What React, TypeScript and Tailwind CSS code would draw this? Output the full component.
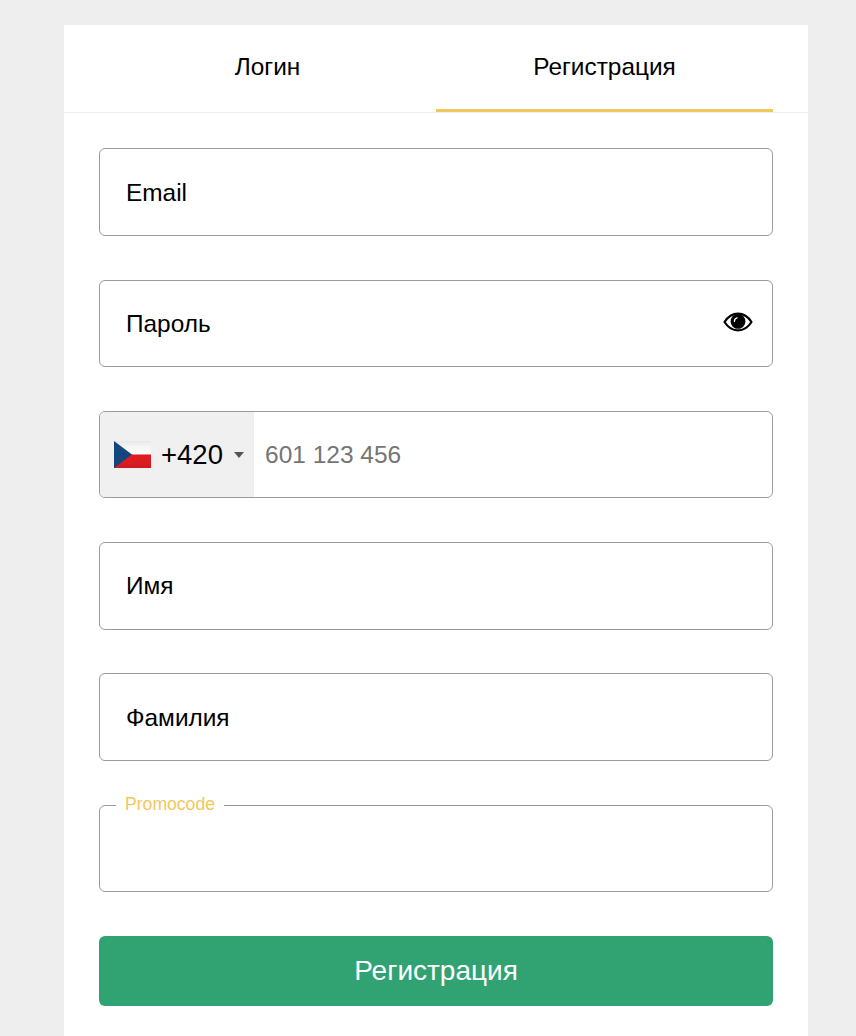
import React from 'react';

const fieldClass = "w-full h-[87.5px] border border-[#9b9b9b] rounded-[6px] bg-white pl-[26px] pr-4 pt-[2px] text-[24.4px] text-black placeholder:text-black outline-none";

const Eye = () => (
  <svg width="30" height="20" viewBox="0 0 30 20" className="absolute right-[20px] top-[32.5px]">
    <path d="M1.5 10C5 4.5 9.5 1.6 15 1.6S25 4.5 28.5 10C25 15.5 20.5 18.4 15 18.4S5 15.5 1.5 10Z" fill="#fff" stroke="#000" strokeWidth="2.2" strokeLinejoin="round" />
    <circle cx="15" cy="9.4" r="7.4" fill="#000" />
    <path d="M11.4 9.5C11.4 7.6 12.4 6.3 14 5.8" fill="none" stroke="#fff" strokeWidth="1.3" strokeLinecap="round" />
  </svg>
);

const CzechFlag = () => (
  <svg width="37" height="27" viewBox="0 0 37 27" className="shrink-0">
    <defs>
      <linearGradient id="shade" x1="0" y1="0" x2="0" y2="1">
        <stop offset="0" stopColor="#000" stopOpacity="0.08" />
        <stop offset="0.5" stopColor="#fff" stopOpacity="0" />
        <stop offset="1" stopColor="#000" stopOpacity="0.06" />
      </linearGradient>
    </defs>
    <rect width="37" height="13.5" fill="#fbfbfb" />
    <rect y="13.5" width="37" height="13.5" fill="#de1a1f" />
    <path d="M0 0L18 13.5L0 27Z" fill="#11457e" />
    <rect width="37" height="27" fill="url(#shade)" />
  </svg>
);

export default function App() {
  return (
    <div className="h-[1036px] overflow-hidden bg-[#eeeeee] pt-[25px] font-['Liberation_Sans',Arial,sans-serif]">
      <div className="mx-[64px] w-[744px] bg-white min-h-[1011px]">
        {/* tabs */}
        <div className="border-b border-[#eeeeee] px-[35px] h-[88px]">
          <div className="flex h-[87px]">
            <button className="flex-1 text-[24.4px] text-black pb-[3px]">Логин</button>
            <button className="flex-1 text-[24.4px] text-black pt-[1px] border-b-[3px] border-[#f2c75c]">Регистрация</button>
          </div>
        </div>

        <form className="px-[35px] pt-[35.4px] flex flex-col gap-[43.75px]">
          <input className={fieldClass} placeholder="Email" />

          <div className="relative">
            <input className={fieldClass} placeholder="Пароль" />
            <Eye />
          </div>

          <div className="flex h-[87.5px] border border-[#9b9b9b] rounded-[6px] overflow-hidden bg-white">
            <div className="flex items-center w-[154px] bg-[#f0f0f0] pl-[14px] shrink-0">
              <CzechFlag />
              <span className="ml-[10px] text-[27.5px] text-black">+420</span>
              <span className="ml-[11px] w-0 h-0 border-x-[5px] border-x-transparent border-t-[6px] border-t-[#555555]" />
            </div>
            <input className="flex-1 pl-[11px] pt-[2px] text-[24.5px] text-black placeholder:text-[#757575] outline-none" placeholder="601 123 456" />
          </div>

          <input className={`${fieldClass} pb-[1px]`} placeholder="Имя" />

          <input className={fieldClass} placeholder="Фамилия" />

          <div className="relative">
            <input className={fieldClass} />
            <span className="absolute left-[17px] top-[-10px] bg-white px-[9px] text-[17.6px] leading-[18px] text-[#f2c75c]">Promocode</span>
          </div>

          <button type="button" className="w-full h-[70px] rounded-[6px] bg-[#31a272] text-white text-[28px]">Регистрация</button>
        </form>
      </div>
    </div>
  );
}
